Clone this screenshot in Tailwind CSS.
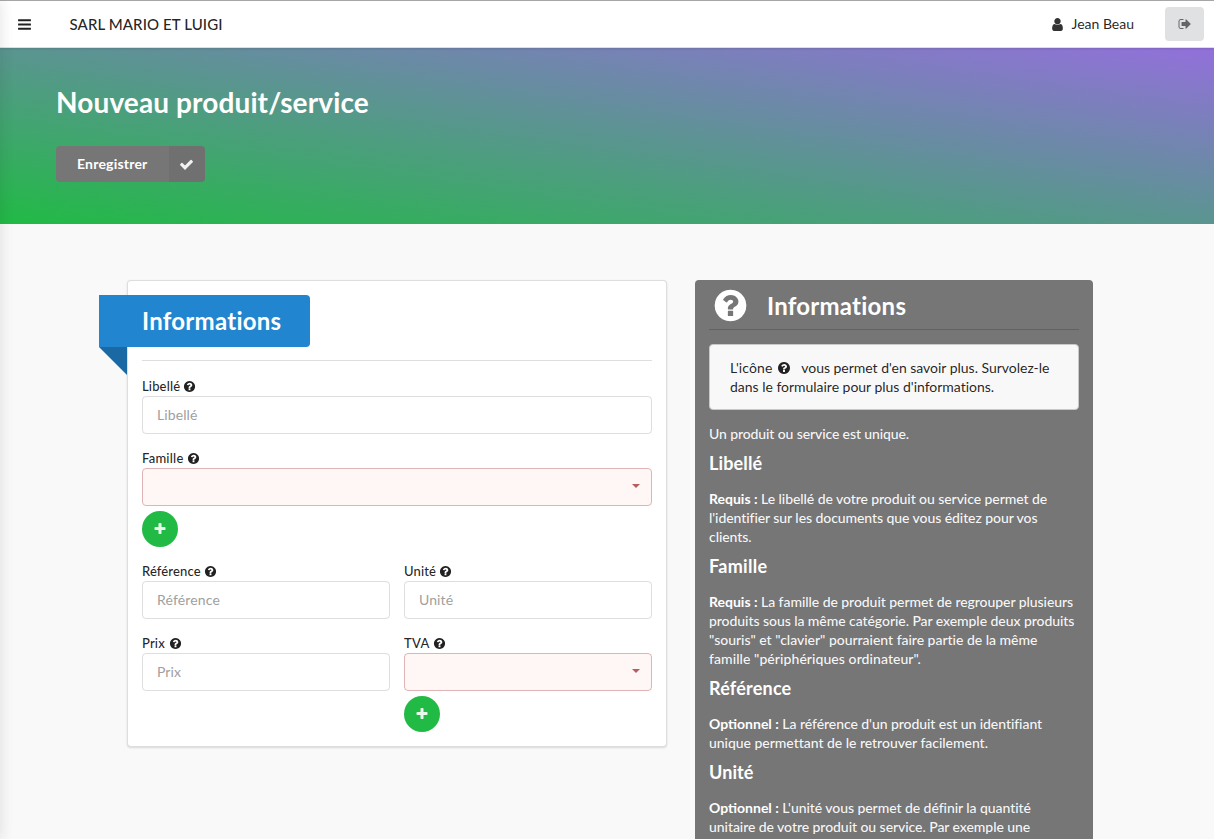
<!DOCTYPE html>
<html lang="fr">
<head>
<meta charset="utf-8">
<title>Nouveau produit/service</title>
<script src="https://cdn.jsdelivr.net/npm/@tailwindcss/browser@4"></script>
</head>
<body class="relative flex h-[839px] flex-col overflow-hidden bg-[#f9f9f9] font-['Lato',sans-serif] text-[14px] leading-[19px] text-black/87">
<svg class="hidden">
  <symbol id="bars" viewBox="0 0 1792 1792"><path d="M1664 1344v128q0 26-19 45t-45 19h-1408q-26 0-45-19t-19-45v-128q0-26 19-45t45-19h1408q26 0 45 19t19 45zm0-512v128q0 26-19 45t-45 19h-1408q-26 0-45-19t-19-45v-128q0-26 19-45t45-19h1408q26 0 45 19t19 45zm0-512v128q0 26-19 45t-45 19h-1408q-26 0-45-19t-19-45v-128q0-26 19-45t45-19h1408q26 0 45 19t19 45z"/></symbol>
  <symbol id="user" viewBox="0 0 1792 1792"><path d="M1536 1399q0 109-62.500 187t-150.500 78h-854q-88 0-150.500-78t-62.500-187q0-85 8.500-160.500t31.500-152 58.500-131 94-89 134.500-34.500q131 128 313 128t313-128q76 0 134.500 34.500t94 89 58.500 131 31.500 152 8.500 160.500zm-256-887q0 159-112.500 271.500t-271.500 112.500-271.500-112.500-112.500-271.500 112.500-271.500 271.500-112.500 271.500 112.500 112.500 271.500z"/></symbol>
  <symbol id="help" viewBox="0 0 1792 1792"><path d="M1024 1376v-192q0-14-9-23t-23-9h-192q-14 0-23 9t-9 23v192q0 14 9 23t23 9h192q14 0 23-9t9-23zm256-672q0-88-55.500-163t-138.500-116-170-41q-243 0-371 213-15 24 8 42l132 100q7 6 19 6 16 0 25-12 53-68 86-92 34-24 86-24 48 0 85.500 26t37.500 59q0 38-20 61t-68 45q-63 28-115.500 86.500t-52.500 125.500v36q0 14 9 23t23 9h192q14 0 23-9t9-23q0-19 21.500-49.500t54.500-49.500q32-18 49-28.500t46-35 44.500-48 28-60.500 12.500-81zm384 192q0 209-103 385.500t-279.500 279.500-385.500 103-385.500-103-279.500-279.500-103-385.500 103-385.500 279.500-279.500 385.500-103 385.500 103 279.500 279.500 103 385.500z"/></symbol>
  <symbol id="check" viewBox="0 0 1792 1792"><path d="M1671 566q0 40-28 68l-724 724-136 136q-28 28-68 28t-68-28l-136-136-362-362q-28-28-28-68t28-68l136-136q28-28 68-28t68 28l294 295 656-657q28-28 68-28t68 28l136 136q28 28 28 68z"/></symbol>
  <symbol id="plus" viewBox="0 0 1792 1792"><path d="M1600 736v192q0 40-28 68t-68 28h-416v416q0 40-28 68t-68 28h-192q-40 0-68-28t-28-68v-416h-416q-40 0-68-28t-28-68v-192q0-40 28-68t68-28h416v-416q0-40 28-68t68-28h192q40 0 68 28t28 68v416h416q40 0 68 28t28 68z"/></symbol>
  <symbol id="signout" viewBox="0 0 1792 1792"><path d="M704 1440q0 4 1 20t.5 26.500-3 23.500-10 19.500-20.500 6.500h-320q-119 0-203.500-84.500t-84.500-203.500v-704q0-119 84.500-203.500t203.500-84.500h320q13 0 22.500 9.500t9.500 22.500q0 4 1 20t.5 26.500-3 23.500-10 19.500-20.500 6.500h-320q-66 0-113 47t-47 113v704q0 66 47 113t113 47h312l11.500 1 11.500 3 8 5.500 7 9 2 13.500zm928-544q0 26-19 45l-544 544q-19 19-45 19t-45-19-19-45v-288h-448q-26 0-45-19t-19-45v-384q0-26 19-45t45-19h448v-288q0-26 19-45t45-19 45 19l544 544q19 19 19 45z"/></symbol>
</svg>

<header class="relative z-10 flex h-[48px] shrink-0 items-center border-t border-b border-t-[#a6a6a6] border-b-[#dededf] bg-white pr-[10px] pl-[17px] shadow-[0_1px_2px_rgba(34,36,38,0.15)]">
  <svg class="size-[15px] fill-black/87"><use href="#bars"/></svg>
  <div class="ml-[37.500px] text-[15px] font-medium tracking-[0.1px]">SARL MARIO ET LUIGI</div>
  <svg class="ml-auto size-[15px] fill-black/80"><use href="#user"/></svg>
  <div class="ml-[6px] pb-[2px]">Jean Beau</div>
  <button class="ml-[31px] flex h-[34px] w-[39px] items-center justify-center rounded-[4px] bg-[#e0e1e2]"><svg class="size-[14px] fill-black/55"><use href="#signout"/></svg></button>
</header>

<section class="flex h-[176px] shrink-0 flex-col items-start bg-[linear-gradient(to_top_right,#21ba45,#9370db)] pt-[36px] pl-[56px]">
  <h1 class="h-[36px] text-[28px] leading-[36px] font-bold tracking-[0.12px] text-white">Nouveau produit/service</h1>
  <button class="mt-[26px] flex h-[36px] w-[149px] overflow-hidden rounded-[4px] bg-[#767676] font-bold text-white">
    <span class="flex h-full flex-1 items-center pb-[2px] pl-[21px] tracking-[0.2px]">Enregistrer</span>
    <span class="flex h-full w-[36px] items-center justify-center bg-black/5 pr-px"><svg class="size-[15px] fill-white/90"><use href="#check"/></svg></span>
  </button>
</section>

<main class="flex items-start gap-[28px] pt-[56px] pl-[127px]">
  <section class="w-[540px] shrink-0 rounded-[4px] border border-[#22242626] bg-white p-[14px] shadow-[0_1px_2px_0_rgba(34,36,38,0.15)]">
    <div class="relative -ml-[43px] flex h-[52px] w-[211px] items-center rounded-r-[4px] bg-[#2185d0] pb-[2px] pl-[43px] text-[24px] font-bold tracking-[0.26px] text-white">Informations
      <svg class="absolute top-full left-0 h-[28px] w-[28px] fill-[#1a69a4]" viewBox="0 0 28 28"><path d="M0 0h28v28z"/></svg>
    </div>
    <div class="mt-[13px] h-px bg-[#22242626]"></div>
    <form class="mt-[16px] flex flex-col gap-[15px]">
      <div>
        <label class="flex h-[19px] items-center gap-[3px] text-[13px] font-medium tracking-[0.15px]">Libellé <svg class="size-[13px] fill-[#212121]"><use href="#help"/></svg></label>
        <input class="block h-[38px] w-full rounded-[4px] border border-[#22242626] px-[14px] pb-[2px] tracking-[0.1px] placeholder:text-[#a0a0a0]" placeholder="Libellé">
      </div>
      <div>
        <label class="flex h-[19px] items-center gap-[3.500px] text-[13px] font-medium tracking-[0.23px]">Famille <svg class="size-[13px] fill-[#212121]"><use href="#help"/></svg></label>
        <div class="flex h-[38px] items-center justify-end rounded-[4px] border border-[#e0b4b4] bg-[#fff6f6] pr-[11px] pb-[2px]"><svg class="h-[4px] w-[8px] fill-[#b25f5e]" viewBox="0 0 8 4"><path d="M0 0h8L4 4z"/></svg></div>
        <button type="button" class="mt-[5px] flex size-[36px] items-center justify-center rounded-full bg-[#21ba45]"><svg class="size-[14px] fill-white/90"><use href="#plus"/></svg></button>
      </div>
      <div class="grid grid-cols-2 gap-x-[14px] gap-y-[15px]">
        <div>
          <label class="flex h-[19px] items-center gap-[3.500px] text-[13px] font-medium tracking-[0.13px]">Référence <svg class="size-[13px] fill-[#212121]"><use href="#help"/></svg></label>
          <input class="block h-[38px] w-full rounded-[4px] border border-[#22242626] px-[14px] pb-[2px] tracking-[0.15px] placeholder:text-[#a0a0a0]" placeholder="Référence">
        </div>
        <div>
          <label class="flex h-[19px] items-center gap-[3px] text-[13px] font-medium tracking-[0.15px]">Unité <svg class="size-[13px] fill-[#212121]"><use href="#help"/></svg></label>
          <input class="block h-[38px] w-full rounded-[4px] border border-[#22242626] px-[14px] pb-[2px] tracking-[0.1px] placeholder:text-[#a0a0a0]" placeholder="Unité">
        </div>
        <div>
          <label class="flex h-[19px] items-center gap-[4px] text-[13px] font-medium tracking-[0.15px]">Prix <svg class="size-[13px] fill-[#212121]"><use href="#help"/></svg></label>
          <input class="block h-[38px] w-full rounded-[4px] border border-[#22242626] px-[14px] pb-[2px] tracking-[0.1px] placeholder:text-[#a0a0a0]" placeholder="Prix">
        </div>
        <div>
          <label class="flex h-[19px] items-center gap-[3px] text-[13px] font-medium tracking-[0.3px]">TVA <svg class="size-[13px] fill-[#212121]"><use href="#help"/></svg></label>
          <div class="flex h-[38px] items-center justify-end rounded-[4px] border border-[#e0b4b4] bg-[#fff6f6] pr-[11px] pb-[2px]"><svg class="h-[4px] w-[8px] fill-[#b25f5e]" viewBox="0 0 8 4"><path d="M0 0h8L4 4z"/></svg></div>
          <button type="button" class="mt-[5px] flex size-[36px] items-center justify-center rounded-full bg-[#21ba45]"><svg class="size-[14px] fill-white/90"><use href="#plus"/></svg></button>
        </div>
      </div>
    </form>
  </section>

  <aside class="h-[559px] w-[398px] shrink-0 rounded-t-[4px] bg-[#767676] px-[14px] text-white/95">
    <div class="flex h-[50px] items-center border-b border-[#22242640] pt-[2px] text-white">
      <svg class="ml-[2.500px] size-[37px] fill-white"><use href="#help"/></svg>
      <h2 class="ml-[18.500px] pb-[1px] text-[24px] font-bold tracking-[0.24px]">Informations</h2>
    </div>
    <div class="mt-[14px] h-[66px] rounded-[4px] border border-[#c9c9ca] bg-[#f8f8f9] px-[20px] pt-[13px] text-black/87">
      <span class="tracking-[0.1px]">L'icône</span> <svg class="mr-[3px] ml-[1px] inline-block size-[14px] fill-[#212121] align-[-2px]"><use href="#help"/></svg>&nbsp; <span class="tracking-[-0.02px]">vous permet d'en savoir plus. Survolez-le<br>dans le formulaire pour plus d'informations.</span>
    </div>
    <p class="mt-[14px] font-medium tracking-[-0.11px]">Un produit ou service est unique.</p>
    <h3 class="mt-[9px] mb-[14px] h-[23px] text-[18px] leading-[23px] font-bold tracking-[0.15px] text-white">Libellé</h3>
    <p class="font-medium tracking-[-0.07px]"><b class="tracking-normal text-white">Requis :</b> Le libellé de votre produit ou service permet de<br>l'identifier sur les documents que vous éditez pour vos<br>clients.</p>
    <h3 class="mt-[9px] mb-[14px] h-[23px] text-[18px] leading-[23px] font-bold tracking-[0.3px] text-white">Famille</h3>
    <p class="font-medium tracking-[-0.06px]"><b class="tracking-normal text-white">Requis :</b> La famille de produit permet de regrouper plusieurs<br>produits sous la même catégorie. Par exemple deux produits<br><span class="tracking-[-0.02px]">"souris" et "clavier" pourraient faire partie de la même</span><br><span class="tracking-[0.07px]">famille "périphériques ordinateur".</span></p>
    <h3 class="mt-[9px] mb-[14px] h-[23px] text-[18px] leading-[23px] font-bold tracking-[0.2px] text-white">Référence</h3>
    <p class="font-medium tracking-[-0.06px]"><b class="tracking-normal text-white">Optionnel :</b> La référence d'un produit est un identifiant<br><span class="tracking-[-0.03px]">unique permettant de le retrouver facilement.</span></p>
    <h3 class="mt-[9px] mb-[14px] h-[23px] text-[18px] leading-[23px] font-bold tracking-[0.1px] text-white">Unité</h3>
    <p class="font-medium tracking-[-0.06px]"><b class="tracking-normal text-white">Optionnel :</b> L'unité vous permet de définir la quantité<br>unitaire de votre produit ou service. Par exemple une</p>
  </aside>
</main>
<div class="pointer-events-none absolute top-0 -left-[10px] z-20 h-full w-[10px] shadow-[0_0_14px_rgba(34,36,38,0.15)]"></div>
</body>
</html>
